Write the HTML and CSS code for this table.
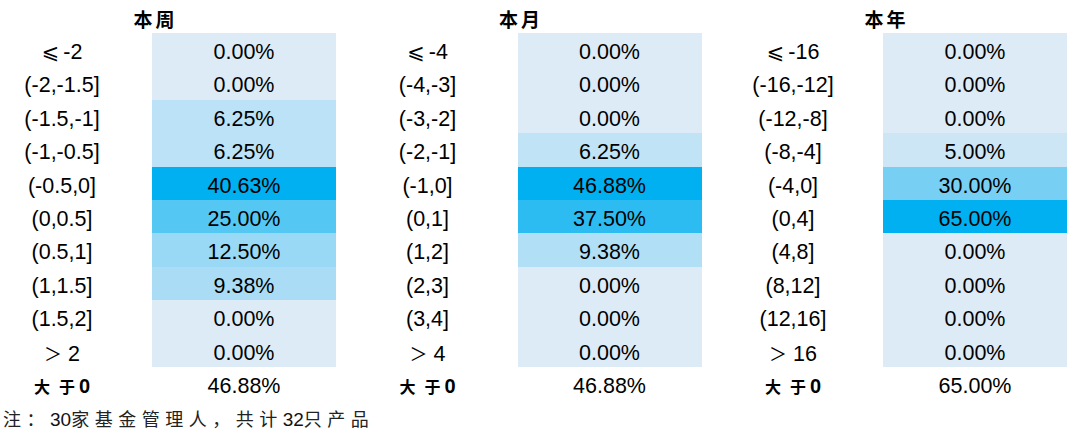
FILE: index.html
```html
<!DOCTYPE html>
<html lang="zh">
<head>
<meta charset="utf-8">
<link rel="stylesheet" href="styles.css">
</head>
<body>
<div class="tables">
  <div class="tbl">
    <div class="head">本周</div>
    <div class="lab"><span class="le">⩽</span>-2</div><div class="val c0">0.00%</div>
    <div class="lab">(-2,-1.5]</div><div class="val c0">0.00%</div>
    <div class="lab">(-1.5,-1]</div><div class="val" style="background:#bbe2f6">6.25%</div>
    <div class="lab">(-1,-0.5]</div><div class="val" style="background:#bbe2f6">6.25%</div>
    <div class="lab">(-0.5,0]</div><div class="val" style="background:#00b0f0">40.63%</div>
    <div class="lab">(0,0.5]</div><div class="val" style="background:#55c7f3">25.00%</div>
    <div class="lab">(0.5,1]</div><div class="val" style="background:#99d9f5">12.50%</div>
    <div class="lab">(1,1.5]</div><div class="val" style="background:#aaddf5">9.38%</div>
    <div class="lab">(1.5,2]</div><div class="val c0">0.00%</div>
    <div class="lab"><span class="gt">＞</span>2</div><div class="val c0">0.00%</div>
    <div class="lab sum"><span class="s1">大</span><span class="s2">于</span>0</div><div class="val plain">46.88%</div>
  </div>
  <div class="tbl">
    <div class="head">本月</div>
    <div class="lab"><span class="le">⩽</span>-4</div><div class="val c0">0.00%</div>
    <div class="lab">(-4,-3]</div><div class="val c0">0.00%</div>
    <div class="lab">(-3,-2]</div><div class="val c0">0.00%</div>
    <div class="lab">(-2,-1]</div><div class="val" style="background:#c0e3f6">6.25%</div>
    <div class="lab">(-1,0]</div><div class="val" style="background:#00b0f0">46.88%</div>
    <div class="lab">(0,1]</div><div class="val" style="background:#2cbcf1">37.50%</div>
    <div class="lab">(1,2]</div><div class="val" style="background:#b1dff6">9.38%</div>
    <div class="lab">(2,3]</div><div class="val c0">0.00%</div>
    <div class="lab">(3,4]</div><div class="val c0">0.00%</div>
    <div class="lab"><span class="gt">＞</span>4</div><div class="val c0">0.00%</div>
    <div class="lab sum"><span class="s1">大</span><span class="s2">于</span>0</div><div class="val plain">46.88%</div>
  </div>
  <div class="tbl">
    <div class="head">本年</div>
    <div class="lab"><span class="le">⩽</span>-16</div><div class="val c0">0.00%</div>
    <div class="lab">(-16,-12]</div><div class="val c0">0.00%</div>
    <div class="lab">(-12,-8]</div><div class="val c0">0.00%</div>
    <div class="lab">(-8,-4]</div><div class="val" style="background:#cce6f6">5.00%</div>
    <div class="lab">(-4,0]</div><div class="val" style="background:#77d0f4">30.00%</div>
    <div class="lab">(0,4]</div><div class="val" style="background:#00b0f0">65.00%</div>
    <div class="lab">(4,8]</div><div class="val c0">0.00%</div>
    <div class="lab">(8,12]</div><div class="val c0">0.00%</div>
    <div class="lab">(12,16]</div><div class="val c0">0.00%</div>
    <div class="lab"><span class="gt">＞</span>16</div><div class="val c0">0.00%</div>
    <div class="lab sum"><span class="s1">大</span><span class="s2">于</span>0</div><div class="val plain">65.00%</div>
  </div>
</div>
<p class="note"><span class="ncjk">注：</span>30<span class="ncjk">家基金管理人，共计</span>32<span class="ncjk">只产品</span></p>
</body>
</html>
```

FILE: styles.css
```css
html, body {
  margin: 0;
  padding: 0;
  background: #ffffff;
}

body {
  font-family: "Liberation Sans", Arial, "DejaVu Sans", "Noto Sans CJK SC", sans-serif;
  color: #000000;
  width: 1080px;
  height: 440px;
  overflow: hidden;
}

.tables {
  display: flex;
  gap: 1.5px;
  margin-left: -28px;
}

.tbl {
  display: grid;
  grid-template-columns: 180px 184px;
  grid-template-rows: 33px repeat(11, 33.4px);
}

.head {
  grid-column: 1 / -1;
  text-align: center;
  font-family: "Noto Sans CJK SC", sans-serif;
  font-weight: 700;
  font-size: 19px;
  letter-spacing: 3px;
  padding-left: 3px;
  line-height: 28px;
  padding-top: 5px;
  box-sizing: border-box;
}

.lab,
.val {
  text-align: center;
  font-size: 21.5px;
  line-height: 33.4px;
  padding-top: 3px;
  box-sizing: border-box;
  white-space: nowrap;
}

.c0 {
  background: #ddebf7;
}

.plain {
  background: transparent;
}

.le {
  font-family: "DejaVu Sans", sans-serif;
  font-size: 21px;
  margin-right: 4px;
}

.gt {
  font-family: "Noto Sans CJK SC", sans-serif;
  font-size: 18px;
  margin-right: 6px;
}

.sum {
  font-weight: 700;
  font-size: 20px;
}

.s1,
.s2 {
  font-family: "Noto Sans CJK SC", sans-serif;
  font-size: 16px;
}

.s1 {
  margin-right: 9px;
}

.s2 {
  margin-right: 4px;
}

.note {
  margin: 6px 0 0 3px;
  font-size: 19px;
  line-height: 24px;
  color: #111111;
  white-space: nowrap;
}

.ncjk {
  font-family: "Noto Sans CJK SC", sans-serif;
  font-size: 18px;
  letter-spacing: 5.5px;
  color: #222222;
}
```
